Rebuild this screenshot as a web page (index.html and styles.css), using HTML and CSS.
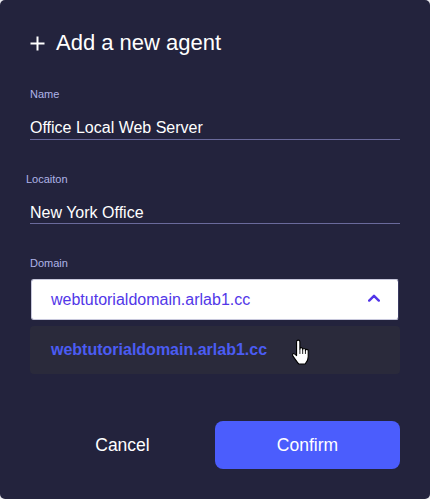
FILE: index.html
```html
<!DOCTYPE html>
<html lang="en">
<head>
<meta charset="utf-8">
<title>Add a new agent</title>
<link rel="stylesheet" href="styles.css">
</head>
<body>
<div class="dialog">
  <h2 class="title">
    <svg class="plus" width="15" height="15" viewBox="0 0 15 15"><path d="M7.5 0.5V14.5M0.5 7.5H14.5" stroke="#fff" stroke-width="2" fill="none"/></svg>
    <span>Add a new agent</span>
  </h2>

  <div class="label label-name">Name</div>
  <div class="input input-name">Office Local Web Server</div>

  <div class="label label-loc">Locaiton</div>
  <div class="input input-loc">New York Office</div>

  <div class="label label-domain">Domain</div>
  <div class="select">
    <span class="select-value">webtutorialdomain.arlab1.cc</span>
    <svg class="chevron" width="12" height="8" viewBox="0 0 12 8"><path d="M1.2 6.6L6 1.8L10.8 6.6" stroke="#5235e8" stroke-width="2.4" fill="none" stroke-linecap="round" stroke-linejoin="round"/></svg>
  </div>
  <ul class="options">
    <li class="option">webtutorialdomain.arlab1.cc</li>
    <svg class="cursor" width="20" height="26.6" viewBox="0 0 18 24"><path d="M5 2.5A1.5 1.5 0 0 1 8 2.5V9A1.25 1.25 0 0 1 10.5 9V9.8A1.25 1.25 0 0 1 13 9.8V10.6A1.25 1.25 0 0 1 15.5 10.6V16C15.5 19 14.2 21 12.8 22.5H7C5.5 20.8 3.5 18 1.6 15.2C0.8 14 1.9 12.6 3.1 13.4L5 15Z" fill="#fff" stroke="#000" stroke-width="1" stroke-linejoin="round"/><path d="M8 9V13.5M10.5 9.8V13.5M13 10.6V13.5" stroke="#000" stroke-width="0.8"/></svg>
  </ul>

  <div class="actions">
    <button class="btn btn-cancel">Cancel</button>
    <button class="btn btn-confirm">Confirm</button>
  </div>
</div>
</body>
</html>
```

FILE: styles.css
```css
html, body {
  margin: 0;
  padding: 0;
  background: #e9e9ee;
}
.dialog {
  width: 430px;
  height: 499px;
  box-sizing: border-box;
  background: #23233d;
  border-radius: 5px;
  padding: 31px 30px 0 30px;
  font-family: "Liberation Sans", Arial, sans-serif;
  color: #fff;
  overflow: hidden;
}
.title {
  margin: 0;
  display: flex;
  align-items: center;
  gap: 11px;
  font-size: 22px;
  line-height: 22px;
  font-weight: normal;
  color: #fff;
  padding-top: 0.5px;
}
.plus {
  display: block;
  margin-top: 2px;
}
.label {
  font-size: 11px;
  line-height: 13px;
  color: #afb4e8;
}
.label-name { margin-top: 34.5px; }
.label-loc { margin-top: 33px; margin-left: -4px; }
.label-domain { margin-top: 33px; }
.input {
  font-size: 16px;
  line-height: 20px;
  color: #fff;
  border-bottom: 1px solid #6a6a9c;
}
.input-name { margin-top: 16.5px; padding-bottom: 1.5px; }
.input-loc { margin-top: 17px; }
.select {
  margin-top: 9px;
  height: 41px;
  box-sizing: border-box;
  background: #fff;
  border: 1px solid #c8c8dc;
  border-right-color: #3a3a60;
  border-radius: 3px;
  margin-left: 1px;
  margin-right: 1px;
  display: flex;
  align-items: center;
  justify-content: space-between;
  padding: 0 18px 0 19px;
}
.select-value {
  font-size: 16px;
  line-height: 20px;
  color: #5237e8;
}
.chevron { display: block; margin-top: -3px; }
.options {
  list-style: none;
  margin: 6px 0 0 0;
  padding: 0;
  height: 48px;
  background: #2a2a3b;
  border-radius: 4px;
  position: relative;
}
.option {
  padding: 14px 0 0 21px;
  font-size: 16px;
  line-height: 20px;
  font-weight: bold;
  color: #4b5cf3;
}
.cursor {
  position: absolute;
  left: 261px;
  top: 13px;
}
.actions {
  margin-top: 47px;
  display: flex;
  align-items: center;
}
.btn {
  font-family: "Liberation Sans", Arial, sans-serif;
  font-size: 17.5px;
  border: 0;
  padding: 0;
  color: #fff;
  height: 48px;
  cursor: pointer;
}
.btn-cancel {
  flex: 1;
  background: transparent;
}
.btn-confirm {
  width: 185px;
  background: #4b5dfd;
  border-radius: 8px;
}
```
